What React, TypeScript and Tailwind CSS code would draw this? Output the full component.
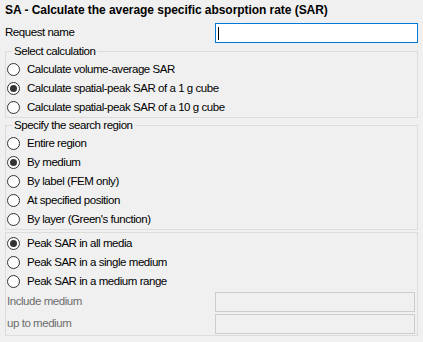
import { useState } from "react";

function Radio({ checked, label, onClick }: { checked: boolean; label: string; onClick: () => void }) {
  return (
    <div className="h-[19px] flex items-center cursor-default" onClick={onClick}>
      <span className="ml-[1px] w-[13px] h-[13px] rounded-full border border-[#333333] bg-white flex items-center justify-center">
        {checked && <span className="w-[7px] h-[7px] rounded-full bg-[#333333]" />}
      </span>
      <span className="ml-[7px] text-black">{label}</span>
    </div>
  );
}

const calcOptions = [
  "Calculate volume-average SAR",
  "Calculate spatial-peak SAR of a 1 g cube",
  "Calculate spatial-peak SAR of a 10 g cube",
];

const regionOptions = [
  "Entire region",
  "By medium",
  "By label (FEM only)",
  "At specified position",
  "By layer (Green's function)",
];

const peakOptions = [
  "Peak SAR in all media",
  "Peak SAR in a single medium",
  "Peak SAR in a medium range",
];

export default function App() {
  const [calc, setCalc] = useState(1);
  const [region, setRegion] = useState(1);
  const [peak, setPeak] = useState(0);

  return (
    <div
      className="w-[423px] h-[342px] bg-[#f0f0f0] px-[5px] text-[11.5px] tracking-[-0.45px] text-black overflow-hidden"
      style={{ fontFamily: '"Liberation Sans", Arial, sans-serif' }}
    >
      <div className="h-[20px] leading-[20px] font-bold text-[12px] tracking-[-0.05px]">
        SA - Calculate the average specific absorption rate (SAR)
      </div>

      <div className="mt-[3px] h-[20px] flex items-center justify-between">
        <span>Request name</span>
        <div className="w-[203px] h-[20px] border border-[#0078d7] bg-white flex items-center">
          <span className="ml-[2px] w-[1px] h-[13px] bg-black" />
        </div>
      </div>

      <fieldset className="mt-[1px] border border-[#dcdcdc] px-0 pt-[2px] pb-0 mx-0">
        <legend className="ml-[6px] px-[2px] leading-[14px]">Select calculation</legend>
        {calcOptions.map((o, i) => (
          <Radio key={o} label={o} checked={calc === i} onClick={() => setCalc(i)} />
        ))}
      </fieldset>

      <fieldset className="border border-[#dcdcdc] px-0 pt-[2px] pb-0 mx-0">
        <legend className="ml-[6px] px-[2px] leading-[14px]">Specify the search region</legend>
        {regionOptions.map((o, i) => (
          <Radio key={o} label={o} checked={region === i} onClick={() => setRegion(i)} />
        ))}
      </fieldset>

      <div className="mt-[2px] border border-[#dcdcdc] pt-[1px] pb-[1px] pr-[2px]">
        {peakOptions.map((o, i) => (
          <Radio key={o} label={o} checked={peak === i} onClick={() => setPeak(i)} />
        ))}
        <div className="mt-[1px] h-[20px] flex items-center justify-between">
          <span className="ml-[1px] text-[#6d6d6d]">Include medium</span>
          <div className="w-[200px] h-[20px] border border-[#cccccc] bg-[#f0f0f0]" />
        </div>
        <div className="mt-[2px] h-[20px] flex items-center justify-between">
          <span className="ml-[1px] text-[#6d6d6d]">up to medium</span>
          <div className="w-[200px] h-[20px] border border-[#cccccc] bg-[#f0f0f0]" />
        </div>
      </div>
    </div>
  );
}
